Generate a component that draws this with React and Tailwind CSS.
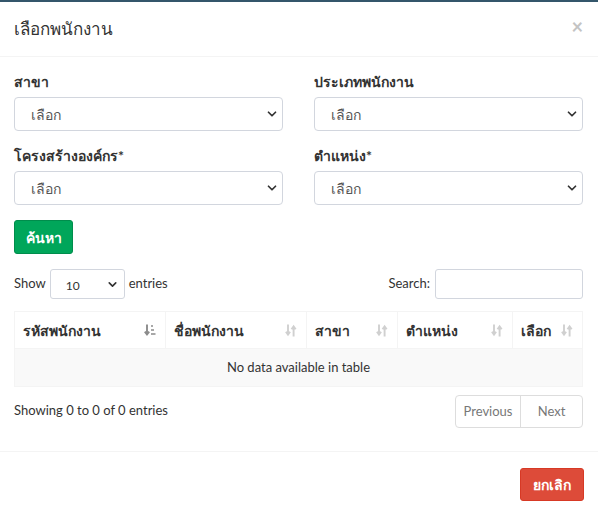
import { ChevronDown } from 'lucide-react';

const font = { fontFamily: 'Lato, "Open Sans", "Noto Sans", sans-serif' };

function SortIcon({ active = false }) {
  // double arrow, like the DataTables glyph
  if (active) {
    return (
      <svg width="12" height="13" viewBox="0 0 12 13" className="shrink-0">
        <path d="M3 0.5v9.5M0.8 7.6L3 10.4l2.2-2.8" stroke="#8c8c8c" strokeWidth="1.9" fill="none" />
        <rect x="7" y="1" width="2" height="2" fill="#a8a8a8" />
        <rect x="7" y="5" width="3" height="2" fill="#a8a8a8" />
        <rect x="7" y="9" width="4.5" height="2" fill="#a8a8a8" />
      </svg>
    );
  }
  return (
    <svg width="12" height="13" viewBox="0 0 12 13" className="shrink-0">
      <path d="M3 0.5v10M0.9 7.8L3 10.6l2.1-2.8" stroke="#d0d0d0" strokeWidth="1.9" fill="none" />
      <path d="M8.6 12.5v-10M6.5 5.2L8.6 2.4l2.1 2.8" stroke="#d0d0d0" strokeWidth="1.9" fill="none" />
    </svg>
  );
}

function Select({ label, value = 'เลือก' }) {
  return (
    <div className="flex flex-col">
      <label className="text-[14px] font-bold text-[#333] leading-[20px] mb-[5px]">{label}</label>
      <div className="h-[34px] border border-[#d2d6de] rounded-[4px] flex items-center justify-between pl-[16px] pr-[3px] text-[#555] text-[14px]">
        <span>{value}</span>
        <ChevronDown size={14} strokeWidth={3} className="text-[#333]" />
      </div>
    </div>
  );
}

const columns = [
  { name: 'รหัสพนักงาน', w: 'w-[150px]', active: true },
  { name: 'ชื่อพนักงาน', w: 'w-[141px]' },
  { name: 'สาขา', w: 'w-[91px]' },
  { name: 'ตำแหน่ง', w: 'w-[115px]' },
  { name: 'เลือก', w: 'flex-1' },
];

export default function App() {
  return (
    <div className="w-[600px] h-[519px] bg-white text-[#333] overflow-hidden" style={font}>
      <div className="w-[598px] border-t-2 border-[#34566b]">
        {/* Header */}
        <div className="h-[55px] flex items-center justify-between px-[15px] border-b border-[#f4f4f4]">
          <h4 className="text-[17px] text-[#333] leading-[24px] -ml-[1px]">เลือกพนักงาน</h4>
          <span className="text-[20px] font-bold text-[#c4c4c4] leading-none -mt-[6px]">×</span>
        </div>

        {/* Body */}
        <div className="px-[14px] pt-[15px]">
          <div className="grid grid-cols-2 gap-x-[31px] gap-y-[15px] w-[569px]">
            <Select label="สาขา" />
            <Select label="ประเภทพนักงาน" />
            <Select label="โครงสร้างองค์กร*" />
            <Select label="ตำแหน่ง*" />
          </div>

          <button className="mt-[15px] h-[34px] w-[59px] rounded-[3px] bg-[#00a65a] border border-[#008d4c] text-white font-bold text-[14px]">
            ค้นหา
          </button>

          {/* Length + search */}
          <div className="mt-[15px] flex items-center justify-between w-[569px] text-[13px]">
            <div className="flex items-center gap-[4px]">
              <span>Show</span>
              <div className="h-[30px] w-[75px] border border-[#d2d6de] rounded-[3px] flex items-center justify-between pl-[15px] pr-[5px] text-[12px]">
                <span className="mt-[3px]">10</span>
                <ChevronDown size={13} strokeWidth={3} className="text-[#333]" />
              </div>
              <span>entries</span>
            </div>
            <div className="flex items-center gap-[5px]">
              <span>Search:</span>
              <div className="h-[30px] w-[148px] border border-[#d2d6de] rounded-[3px]" />
            </div>
          </div>

          {/* Table */}
          <div className="mt-[12px] w-[569px] border border-[#f4f4f4] text-[14px]">
            <div className="flex h-[37px] border-b border-[#f4f4f4]">
              {columns.map((c, i) => (
                <div
                  key={c.name}
                  className={`${c.w} flex items-center justify-between pl-[8px] pr-[9px] font-bold ${i > 0 ? 'border-l border-[#f4f4f4]' : ''}`}
                >
                  <span>{c.name}</span>
                  <SortIcon active={c.active} />
                </div>
              ))}
            </div>
            <div className="h-[37px] bg-[#f9f9f9] flex items-center justify-center text-[13px]">
              No data available in table
            </div>
          </div>

          {/* Info + pagination */}
          <div className="mt-[8px] flex items-center justify-between w-[569px] text-[13px]">
            <span className="-mt-[2px]">Showing 0 to 0 of 0 entries</span>
            <div className="flex h-[33px] border border-[#ddd] rounded-[4px] text-[#777]">
              <span className="w-[65px] flex items-center justify-center border-r border-[#ddd]">Previous</span>
              <span className="w-[61px] flex items-center justify-center">Next</span>
            </div>
          </div>
        </div>

        {/* Footer */}
        <div className="mt-[23px] border-t border-[#f4f4f4] px-[14px] pt-[16px] flex justify-end w-[598px]">
          <button className="h-[33px] w-[64px] rounded-[3px] bg-[#dd4b39] border border-[#d73925] text-white font-bold text-[14px]">
            ยกเลิก
          </button>
        </div>
      </div>
    </div>
  );
}
